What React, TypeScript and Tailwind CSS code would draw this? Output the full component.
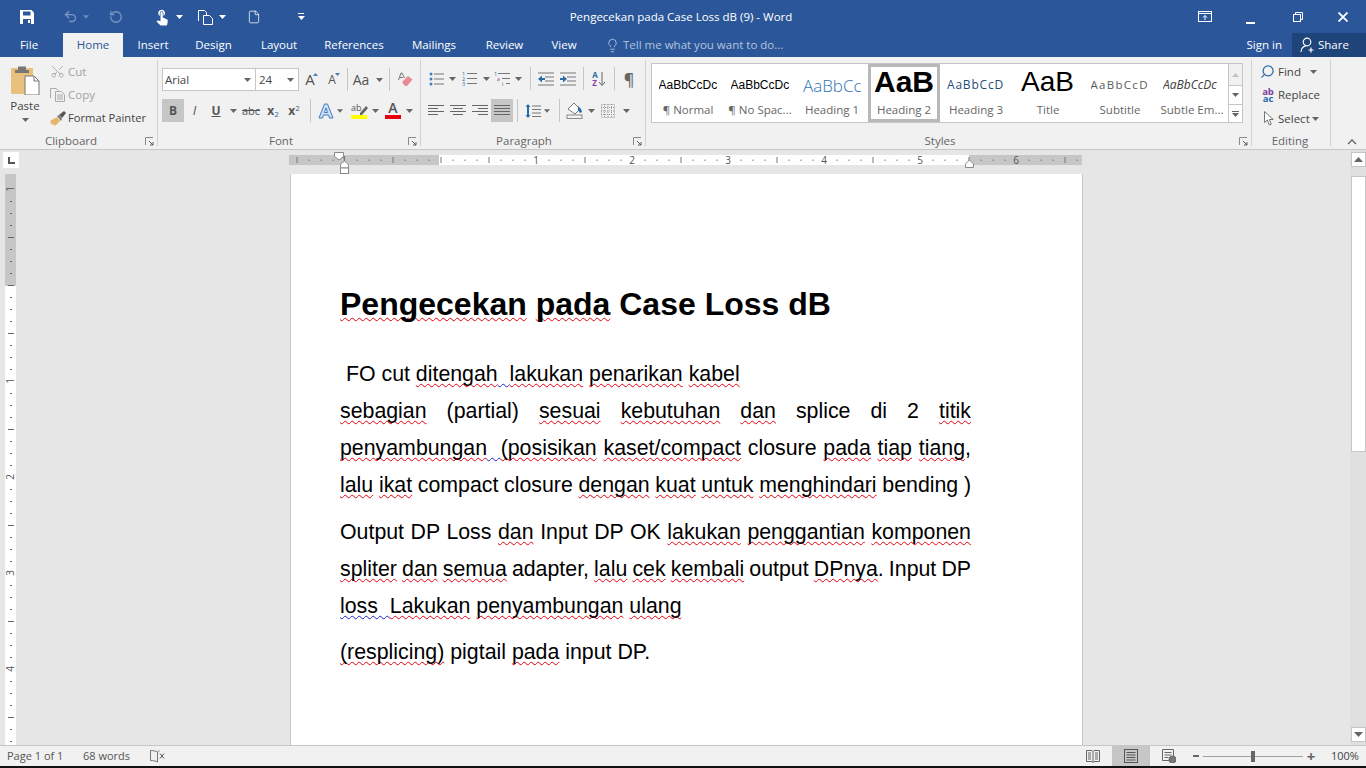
import React from "react";
import { Undo2, RotateCcw, File, Scissors, Search, Lightbulb } from "lucide-react";
import { MdTouchApp } from "react-icons/md";

const Caret = ({ color = "#666" }: { color?: string }) => (
  <svg width="7" height="4" viewBox="0 0 7 4">
    <path d="M0 0h7L3.5 4z" fill={color} />
  </svg>
);

const Launcher = () => (
  <svg width="9" height="9" viewBox="0 0 9 9" fill="none">
    <path d="M0.5 8V0.5H8" stroke="#8a8a8a" />
    <path d="M4 4l4 4M8 5v3H5" stroke="#5a5a5a" />
  </svg>
);

const Lines = ({ rows }: { rows: [number, number][] }) => (
  <svg width="16" height="14" viewBox="0 0 16 14">
    {rows.map(([x, w], i) => (
      <rect key={i} x={x} y={1 + i * 3} width={w} height="1" fill="#666" />
    ))}
  </svg>
);

const VDivider = ({ className }: { className: string }) => (
  <div className={`h-[23px] w-px shrink-0 bg-[#c6c6c6] ${className}`} />
);

const TitleBar = () => (
  <div className="flex h-[33px] items-center text-white">
    <div className="ml-[19px] flex w-[16px] justify-center">
      <svg width="16" height="16" viewBox="0 0 16 16">
        <path d="M1 1h11.5L15 3.5V15H1z" fill="#fff" />
        <path d="M4 2.5h7.5v4H4zM4 10h8v5H4z" fill="#2b579a" />
        <rect x="9" y="11" width="2" height="3" fill="#fff" />
      </svg>
    </div>
    <div className="ml-[27px] flex w-[16px] justify-center">
      <Undo2 size={15} color="#7b96c0" strokeWidth={2.2} />
    </div>
    <div className="ml-[5px] flex w-[6px]">
      <Caret color="#6f8cb8" />
    </div>
    <div className="ml-[19px] flex w-[16px] justify-center">
      <RotateCcw size={14} color="#7b96c0" strokeWidth={2.2} />
    </div>
    <div className="ml-[29px] flex w-[18px] justify-center">
      <MdTouchApp size={19} color="#fff" />
    </div>
    <div className="ml-[5px] flex w-[7px]">
      <Caret color="#fff" />
    </div>
    <div className="ml-[14px] flex w-[17px] justify-center">
      <svg width="17" height="16" viewBox="0 0 17 16" fill="none" stroke="#fff">
        <path d="M1.5 12V1.5h6l2 2V6" />
        <path d="M6.5 6.5h6l3 3v6h-9z" />
      </svg>
    </div>
    <div className="ml-[5px] flex w-[7px]">
      <Caret color="#fff" />
    </div>
    <div className="ml-[21px] flex w-[14px] justify-center">
      <File size={16} color="#fff" strokeWidth={1.3} />
    </div>
    <div className="ml-[36px] flex w-[8px] flex-col items-center gap-[2px]">
      <div className="h-px w-[6px] bg-white" />
      <Caret color="#fff" />
    </div>
    <div className="ml-[5px] w-[742px] text-center text-[11.5px]">Pengecekan pada Case Loss dB (9) - Word</div>
    <div className="ml-[146px] flex w-[14px] justify-center">
      <svg width="14" height="11" viewBox="0 0 14 11" fill="none" stroke="#fff">
        <rect x="0.5" y="0.5" width="13" height="10" />
        <path d="M1 2.5h12M7 9V4.5M5 6.5l2-2 2 2" />
      </svg>
    </div>
    <div className="ml-[34px] flex h-[16px] w-[9px] items-end pb-[1px]">
      <div className="h-[2px] w-[9px] bg-white" />
    </div>
    <div className="ml-[38px] flex w-[10px] justify-center">
      <svg width="10" height="10" viewBox="0 0 10 10" fill="none" stroke="#fff">
        <rect x="0.5" y="2.5" width="7" height="7" strokeWidth="1" />
        <path d="M2.5 2V.5h7v7H8" />
      </svg>
    </div>
    <div className="ml-[35px] flex w-[10px] justify-center">
      <svg width="10" height="10" viewBox="0 0 10 10" stroke="#fff" strokeWidth="1.8">
        <path d="M0.5 0.5l9 9M9.5 0.5l-9 9" />
      </svg>
    </div>
  </div>
);

const tabs: [string, string][] = [
  ["Insert", "w-[60px]"],
  ["Design", "w-[61px]"],
  ["Layout", "w-[70px]"],
  ["References", "w-[80px]"],
  ["Mailings", "w-[80px]"],
  ["Review", "w-[61px]"],
  ["View", "w-[58px]"],
];

const TabRow = () => (
  <div className="flex h-[24px] items-center text-[11.5px] text-white">
    <div className="w-[58px] shrink-0 text-center">File</div>
    <div className="ml-[5px] flex h-full w-[60px] shrink-0 items-center justify-center bg-[#f1f1f1] text-[#2b579a]">Home</div>
    {tabs.map(([label, w]) => (
      <div key={label} className={`${w} shrink-0 text-center`}>
        {label}
      </div>
    ))}
    <div className="ml-[11px] flex w-[17px] shrink-0 justify-center">
      <Lightbulb size={15} color="#b5c6de" strokeWidth={1.4} />
    </div>
    <div className="ml-[2px] whitespace-nowrap text-[#b4c4dc]">Tell me what you want to do...</div>
    <div className="ml-auto flex h-full items-center">
      <div className="mr-[10px]">Sign in</div>
      <div className="flex h-full w-[74px] items-center bg-[#1f4479] pl-[8px]">
        <svg width="14" height="16" viewBox="0 0 14 16" fill="none" stroke="#fff" strokeWidth="1.2">
          <circle cx="7" cy="5" r="3.8" />
          <path d="M1 15c0-3.5 2.500-6 5-6.200M8.500 13h5M11 10.500v5" />
        </svg>
        <span className="ml-[4px]">Share</span>
      </div>
    </div>
  </div>
);

const GroupFoot = ({ label, w, launcher = true }: { label: string; w: string; launcher?: boolean }) => (
  <div className="-mb-[2px] mt-auto flex h-[14px] shrink-0 items-center">
    <span className={`${w} text-center text-[11.5px] leading-[14px] text-[#666]`}>{label}</span>
    {launcher && (
      <div className="ml-auto mr-[3px] flex">
        <Launcher />
      </div>
    )}
  </div>
);

const ClipboardGroup = () => (
  <div className="flex w-[158px] shrink-0 flex-col border-r border-[#d0d0d0]">
    <div className="flex h-[73px]">
      <div className="flex w-[50px] flex-col items-center pt-[5px]">
        <svg width="30" height="30" viewBox="0 0 30 30">
          <rect x="1" y="3" width="22" height="26" rx="1" fill="#e8c27d" />
          <path d="M8 1.500h8V5h3v3H5V5h3z" fill="#777" />
          <path d="M15 11h9l5 5v14H15z" fill="#fff" stroke="#777" />
          <path d="M24 11v5h5" fill="none" stroke="#777" />
        </svg>
        <span className="mt-[4px] text-[11.5px] leading-[14px] text-[#444]">Paste</span>
        <div className="mt-[5px] flex">
          <Caret />
        </div>
      </div>
      <div className="flex flex-col text-[11.5px]">
        <div className="flex h-[23px] items-center text-[#a3a3a3]">
          <div className="flex w-[18px]">
            <Scissors size={15} color="#a8a8a8" strokeWidth={1.4} className="-rotate-90" />
          </div>
          Cut
        </div>
        <div className="flex h-[24px] items-center text-[#a3a3a3]">
          <div className="flex w-[18px]">
            <svg width="15" height="14" viewBox="0 0 15 14" fill="none" stroke="#ababab">
              <path d="M0.500 10V0.500h6l1.500 2" />
              <path d="M5.500 3.500h6l3 3v7h-9zM7 7h6M7 9h6M7 11h6" />
            </svg>
          </div>
          Copy
        </div>
        <div className="flex h-[23px] items-center whitespace-nowrap text-[11.2px] text-[#444]">
          <div className="flex w-[18px]">
            <svg width="16" height="15" viewBox="0 0 16 15">
              <path d="M0 10l7-4 3 4-5 5-1-2-2 1z" fill="#e3b568" />
              <path d="M7 5l2-1 3 4-1 2z" fill="#777" />
              <path d="M9 4l5-4 2 2-4 5z" fill="#555" />
            </svg>
          </div>
          Format Painter
        </div>
      </div>
    </div>
    <GroupFoot label="Clipboard" w="w-[142px]" />
  </div>
);

const FontGroup = () => (
  <div className="flex w-[263px] shrink-0 flex-col border-r border-[#d0d0d0] pl-[4px]">
    <div className="mt-[8px] flex h-[23px] items-center text-[#555]">
      <div className="flex h-[23px] w-[94px] items-center border border-[#c6c6c6] bg-white pl-[2px] pr-[4px] text-[11.5px] text-[#444]">
        Arial
        <div className="ml-auto flex">
          <Caret />
        </div>
      </div>
      <div className="flex h-[23px] w-[43px] items-center border border-l-0 border-[#c6c6c6] bg-white pl-[3px] pr-[4px] text-[11.5px] text-[#444]">
        24
        <div className="ml-auto flex">
          <Caret />
        </div>
      </div>
      <div className="relative flex h-full w-[22px] items-center justify-center text-[15px]">
        A
        <svg className="absolute right-[3px] top-[5px]" width="5" height="3" viewBox="0 0 5 3">
          <path d="M0 3h5L2.500 0z" fill="#4a7cb8" />
        </svg>
      </div>
      <div className="relative flex h-full w-[22px] items-center justify-center text-[12px]">
        A
        <svg className="absolute right-[3px] top-[5px]" width="5" height="3" viewBox="0 0 5 3">
          <path d="M0 0h5L2.500 3z" fill="#4a7cb8" />
        </svg>
      </div>
      <VDivider className="ml-[4px]" />
      <div className="flex w-[26px] justify-center text-[14px]">Aa</div>
      <div className="flex w-[10px] justify-center">
        <Caret />
      </div>
      <VDivider className="ml-[5px]" />
      <div className="flex w-[30px] justify-center">
        <svg width="16" height="16" viewBox="0 0 16 16">
          <path d="M5 10l6-6 4.500 3.500L10 14H8z" fill="#e88b96" />
          <path d="M1.500 8l2.500-7h1l2.500 5M3 5.500h3" fill="none" stroke="#777" />
        </svg>
      </div>
    </div>
    <div className="mt-[8px] flex h-[23px] items-center text-[#555]">
      <div className="flex h-full w-[22px] items-center justify-center bg-[#c6c6c6] text-[12px] font-bold">B</div>
      <div className="w-[21px] text-center text-[13px] italic">I</div>
      <div className="w-[22px] text-center text-[12px] font-bold underline">U</div>
      <div className="flex w-[12px] justify-center">
        <Caret />
      </div>
      <div className="ml-[1px] w-[22px] text-center text-[11px] leading-none line-through">abc</div>
      <div className="w-[22px] text-center text-[12px] font-bold">
        x<sub className="text-[8px] font-normal text-[#2b6ca8]">2</sub>
      </div>
      <div className="w-[20px] text-center text-[12px] font-bold">
        x<sup className="text-[8px] font-normal">2</sup>
      </div>
      <VDivider className="ml-[6px]" />
      <div className="ml-[4px] flex w-[22px] justify-center">
        <svg width="16" height="16" viewBox="0 0 16 16">
          <path d="M6.500 1h3L15 15h-3.500l-1-3h-5l-1 3H1z" fill="#cfe0f3" stroke="#3f7cc0" />
          <path d="M8 5l1.600 4.500H6.400z" fill="#fff" stroke="#3f7cc0" />
        </svg>
      </div>
      <div className="flex w-[6px] justify-center">
        <Caret />
      </div>
      <div className="ml-[5px] flex w-[22px] justify-center">
        <svg width="17" height="16" viewBox="0 0 17 16">
          <text x="0" y="8" fontSize="9" fill="#555" fontFamily="Open Sans">ab</text>
          <path d="M9 10l6-7 2 2-6 7H9z" fill="#666" />
          <rect x="0" y="12" width="16" height="4" fill="#ffff00" />
        </svg>
      </div>
      <div className="flex w-[10px] justify-center">
        <Caret />
      </div>
      <div className="ml-[2px] flex w-[22px] flex-col items-center">
        <span className="h-[12px] text-[14px] font-semibold leading-[12px]">A</span>
        <div className="mt-[1px] h-[4px] w-[16px] bg-[#e8000f]" />
      </div>
      <div className="flex w-[10px] justify-center">
        <Caret />
      </div>
    </div>
    <GroupFoot label="Font" w="w-[238px]" />
  </div>
);

const ParagraphGroup = () => (
  <div className="flex w-[225px] shrink-0 flex-col border-r border-[#d0d0d0] pl-[4px]">
    <div className="mt-[7px] flex h-[23px] items-center text-[#555]">
      <div className="flex w-[22px] justify-center">
        <svg width="15" height="14" viewBox="0 0 15 14">
          <circle cx="2" cy="2" r="1.500" fill="#3f7cc0" />
          <circle cx="2" cy="7" r="1.500" fill="#3f7cc0" />
          <circle cx="2" cy="12" r="1.500" fill="#3f7cc0" />
          <path d="M5 2h10M5 7h10M5 12h10" stroke="#777" />
        </svg>
      </div>
      <div className="flex w-[10px] justify-center">
        <Caret />
      </div>
      <div className="flex w-[24px] justify-center">
        <svg width="15" height="15" viewBox="0 0 15 15">
          <text x="0" y="5" fontSize="5.500" fill="#2b6ca8" fontFamily="Open Sans">1</text>
          <text x="0" y="10" fontSize="5.500" fill="#2b6ca8" fontFamily="Open Sans">2</text>
          <text x="0" y="15" fontSize="5.500" fill="#2b6ca8" fontFamily="Open Sans">3</text>
          <path d="M5 2.500h10M5 7.500h10M5 12.500h10" stroke="#777" />
        </svg>
      </div>
      <div className="flex w-[10px] justify-center">
        <Caret />
      </div>
      <div className="flex w-[22px] justify-center">
        <svg width="16" height="15" viewBox="0 0 16 15">
          <text x="0" y="5" fontSize="5.500" fill="#2b6ca8" fontFamily="Open Sans">1</text>
          <text x="3" y="10" fontSize="5" fill="#7a3fa0" fontFamily="Open Sans">a</text>
          <text x="8" y="15" fontSize="5" fill="#555" fontFamily="Open Sans">i</text>
          <path d="M4 2.500h12M8 7.500h8M12 12.500h4" stroke="#777" />
        </svg>
      </div>
      <div className="flex w-[10px] justify-center">
        <Caret />
      </div>
      <VDivider className="ml-[7px]" />
      <div className="flex w-[30px] justify-center">
        <svg width="16" height="14" viewBox="0 0 16 14">
          <path d="M0 1h16M7 5h9M7 9h9M0 13h16" stroke="#777" />
          <path d="M0 7l4-3.500V6h3v2H4v2.500z" fill="#2b6ca8" />
        </svg>
      </div>
      <div className="flex w-[14px] justify-center">
        <svg width="16" height="14" viewBox="0 0 16 14" className="shrink-0">
          <path d="M0 1h16M7 5h9M7 9h9M0 13h16" stroke="#777" />
          <path d="M7 7L3 3.500V6H0v2h3v2.500z" fill="#2b6ca8" />
        </svg>
      </div>
      <VDivider className="ml-[8px]" />
      <div className="flex w-[30px] items-center justify-center">
        <div className="flex flex-col text-[8px] font-bold leading-[8px]">
          <span className="text-[#2b6ca8]">A</span>
          <span className="text-[#8a3fa8]">Z</span>
        </div>
        <svg width="8" height="16" viewBox="0 0 8 16" fill="none" stroke="#666">
          <path d="M4 1v13M1 11l3 3.500L7 11" />
        </svg>
      </div>
      <VDivider className="" />
      <div className="w-[28px] text-center text-[16px] font-semibold leading-none text-[#666]">¶</div>
    </div>
    <div className="mt-[9px] flex h-[23px] items-center">
      <div className="flex w-[22px] justify-center">
        <Lines rows={[[0, 16], [0, 10], [0, 16], [0, 10]]} />
      </div>
      <div className="flex w-[22px] justify-center">
        <Lines rows={[[0, 16], [3, 10], [0, 16], [3, 10]]} />
      </div>
      <div className="flex w-[22px] justify-center">
        <Lines rows={[[0, 16], [6, 10], [0, 16], [6, 10]]} />
      </div>
      <div className="flex h-full w-[22px] items-center justify-center bg-[#c6c6c6]">
        <Lines rows={[[0, 16], [0, 16], [0, 16], [0, 16]]} />
      </div>
      <VDivider className="ml-[4px]" />
      <div className="ml-[4px] flex w-[22px] justify-center">
        <svg width="16" height="16" viewBox="0 0 16 16">
          <path d="M3 1l2.500 3H4v8h1.500L3 15 .500 12H2V4H.500z" fill="#2b6ca8" />
          <path d="M7 3h9M7 6.500h9M7 10h9M7 13.500h9" stroke="#777" />
        </svg>
      </div>
      <div className="flex w-[6px] justify-center">
        <Caret />
      </div>
      <VDivider className="ml-[9px]" />
      <div className="ml-[4px] flex w-[22px] justify-center">
        <svg width="18" height="17" viewBox="0 0 18 17">
          <path d="M2 7l6-6 6 6-5 5z" fill="#fff" stroke="#777" />
          <path d="M12 4l3 3 1 3-2 1-2-3z" fill="#2b6ca8" />
          <rect x="1" y="13" width="15" height="3.500" fill="#f3f3f3" stroke="#888" />
        </svg>
      </div>
      <div className="flex w-[10px] justify-center">
        <Caret />
      </div>
      <div className="flex w-[24px] justify-center">
        <svg width="14" height="14" viewBox="0 0 14 14" fill="none" stroke="#9a9a9a" strokeDasharray="1 1">
          <rect x="0.500" y="0.500" width="13" height="13" />
          <path d="M7 0v14M0 7h14M3.500 0v14M10.500 0v14M0 3.500h14M0 10.500h14" />
        </svg>
      </div>
      <div className="flex w-[12px] justify-center">
        <Caret />
      </div>
    </div>
    <GroupFoot label="Paragraph" w="w-[198px]" />
  </div>
);

const StyleItem = ({ label, preview, previewClass }: { label: string; preview: string; previewClass: string }) => (
  <div className="flex h-[58px] w-[72px] flex-col items-center">
    <div className={`mt-[3px] flex h-[36px] items-center overflow-hidden whitespace-nowrap leading-none ${previewClass}`}>
      {preview}
    </div>
    <div className="whitespace-nowrap text-[11.5px] leading-[14px] text-[#666]">{label}</div>
  </div>
);

const StylesGroup = () => (
  <div className="flex w-[606px] shrink-0 flex-col border-r border-[#d0d0d0]">
    <div className="ml-[5px] mt-[3px] flex h-[60px] w-[592px]">
      <div className="flex flex-1 border border-[#c6c6c6] bg-white">
        <StyleItem label="¶ Normal" previewClass="w-[59px] font-['Liberation_Sans',sans-serif] text-[12px] text-black" preview="AaBbCcDc" />
        <StyleItem label="¶ No Spac..." previewClass="w-[59px] font-['Liberation_Sans',sans-serif] text-[12px] text-black" preview="AaBbCcDc" />
        <StyleItem label="Heading 1" previewClass="w-[58px] text-[17px] font-light text-[#2e74b5]" preview="AaBbCc" />
        <div className="flex h-[58px] w-[72px] flex-col items-center overflow-hidden border-[3px] border-[#b8b8b8]">
          <div className="flex h-[36px] w-[60px] items-center overflow-hidden whitespace-nowrap pb-[6px] font-['Liberation_Sans',sans-serif] text-[30px] font-bold leading-none text-black">
            AaB
          </div>
          <div className="text-[11.5px] leading-[14px] text-[#666]">Heading 2</div>
        </div>
        <StyleItem label="Heading 3" previewClass="w-[58px] text-[12px] tracking-[0.8px] text-[#1f4d78]" preview="AaBbCcD" />
        <StyleItem label="Title" previewClass="w-[54px] pb-[6px] font-['Liberation_Sans',sans-serif] text-[28px] font-light text-black" preview="AaB" />
        <StyleItem label="Subtitle" previewClass="w-[59px] text-[11.5px] tracking-[1.3px] text-[#5a5a5a]" preview="AaBbCcD" />
        <StyleItem label="Subtle Em..." previewClass="w-[58px] text-[12px] italic text-[#404040]" preview="AaBbCcDc" />
      </div>
      <div className="flex w-[14px] flex-col border border-l-0 border-[#c6c6c6]">
        <div className="flex h-[21px] items-center justify-center bg-[#f1f1f1]">
          <svg width="7" height="4" viewBox="0 0 7 4">
            <path d="M0 4h7L3.500 0z" fill="#c2c2c2" />
          </svg>
        </div>
        <div className="flex h-[19px] items-center justify-center border-t border-[#c6c6c6] bg-white">
          <Caret />
        </div>
        <div className="flex flex-1 flex-col items-center justify-center gap-[1px] border-t border-[#c6c6c6] bg-white">
          <div className="h-px w-[7px] bg-[#666]" />
          <Caret />
        </div>
      </div>
    </div>
    <GroupFoot label="Styles" w="w-[588px]" />
  </div>
);

const EditingGroup = () => (
  <div className="flex w-[79px] shrink-0 flex-col border-r border-[#d0d0d0]">
    <div className="flex h-[73px] flex-col text-[11.5px] text-[#444]">
      <div className="flex h-[23px] items-center">
        <div className="flex w-[26px] justify-end pr-[3px]">
          <Search size={15} color="#2b6ca8" strokeWidth={2} className="-scale-x-100" />
        </div>
        Find
        <div className="ml-[9px] flex">
          <Caret />
        </div>
      </div>
      <div className="flex h-[24px] items-center">
        <div className="flex w-[26px] flex-col items-center pl-[6px] text-[9.5px] font-bold leading-[7px]">
          <span className="text-[#7a3fa0]">ab</span>
          <span className="text-[#2b6ca8]">ac</span>
        </div>
        Replace
      </div>
      <div className="flex h-[23px] items-center">
        <div className="flex w-[26px] justify-end pr-[4px]">
          <svg width="10" height="15" viewBox="0 0 10 15" fill="#fff" stroke="#777">
            <path d="M.500.500v11l2.800-2.500 2 5 2-.8-2-4.700h4z" />
          </svg>
        </div>
        Select
        <div className="ml-[2px] flex">
          <Caret />
        </div>
      </div>
    </div>
    <GroupFoot label="Editing" w="w-[76px]" launcher={false} />
  </div>
);

const Ribbon = () => (
  <div className="flex h-[93px] border-b border-[#c6c6c6] bg-[#f1f1f1] pt-[3px]">
    <div className="flex h-[86px]">
      <ClipboardGroup />
      <FontGroup />
      <ParagraphGroup />
      <StylesGroup />
      <EditingGroup />
    </div>
    <div className="ml-[16px] mt-[79px] flex h-[6px]">
      <svg width="10" height="6" viewBox="0 0 10 6" fill="none" stroke="#666" strokeWidth="1.400">
        <path d="M1 5l4-4 4 4" />
      </svg>
    </div>
  </div>
);

const hTicks = Array.from({ length: 66 }, (_, i) => i);

// x coordinates below are page x minus 289
const HRuler = () => (
  <svg width="793" height="24" viewBox="0 0 793 24" className="shrink-0">
    <rect x="0" y="5" width="793" height="10" fill="#c6c6c6" />
    <rect x="150" y="5" width="530" height="10" fill="#fff" />
    {hTicks.map((i) => {
      const x = 7.500 + i * 12;
      const fromZero = i - 12;
      const isNum = fromZero % 8 === 0;
      const isHalf = fromZero % 4 === 0;
      if (isNum && fromZero !== 0) {
        return (
          <text key={i} x={x - 0.500} y="13.500" fontSize="10" fill="#555" textAnchor="middle" fontFamily="Open Sans">
            {Math.abs(fromZero / 8)}
          </text>
        );
      }
      if (isHalf) return <rect key={i} x={x} y="7" width="1" height="6" fill="#777" />;
      return <rect key={i} x={x} y="9.500" width="1" height="1.500" fill="#777" />;
    })}
    <path d="M45.500 2.500h9v4l-4.500 3.500-4.500-3.500z" fill="#fff" stroke="#8a8a8a" />
    <path d="M55.500 11l4 3.500v3.500h-8v-3.500z" fill="#fff" stroke="#8a8a8a" />
    <rect x="51.500" y="18" width="8" height="5.500" fill="#fff" stroke="#8a8a8a" />
    <path d="M680.500 10l4 4v3.500h-8V14z" fill="#fff" stroke="#8a8a8a" />
  </svg>
);

const vTicks = Array.from({ length: 48 }, (_, i) => i);

const VRuler = () => (
  <svg width="11" height="571" viewBox="0 0 11 571" className="ml-[5px] shrink-0">
    <rect x="0" y="0" width="11" height="112" fill="#c6c6c6" />
    <rect x="0" y="112" width="11" height="459" fill="#fff" />
    {vTicks.map((i) => {
      const y = 15 + i * 12;
      const fromZero = i - 8;
      if (fromZero % 8 === 0 && fromZero !== 0) {
        return (
          <text
            key={i}
            x="6"
            y={y + 3}
            fontSize="10"
            fill="#555"
            textAnchor="middle"
            fontFamily="Open Sans"
            transform={`rotate(-90 6 ${y})`}
          >
            {Math.abs(fromZero / 8)}
          </text>
        );
      }
      if (fromZero % 4 === 0) return <rect key={i} x="3" y={y} width="6" height="1" fill="#666" />;
      return <rect key={i} x="5" y={y} width="2" height="1" fill="#666" />;
    })}
  </svg>
);

const Bad = ({ children }: { children: React.ReactNode }) => (
  <span className="underline decoration-[#e8000f] decoration-wavy decoration-1 underline-offset-[2px] [text-decoration-skip-ink:none]">
    {children}
  </span>
);

const Gram = ({ children }: { children: React.ReactNode }) => (
  <span className="underline decoration-[#2222cc] decoration-wavy decoration-1 underline-offset-[2px] [text-decoration-skip-ink:none]">
    {children}
  </span>
);

const Line = ({ children, last = false, extra = "" }: { children: React.ReactNode; last?: boolean; extra?: string }) => (
  <div className={`h-[37px] leading-[37px] ${last ? "" : "text-justify [text-align-last:justify]"} ${extra}`}>
    {children}
  </div>
);

const Page = () => (
  <div className="ml-[275px] h-[571px] w-[791px] shrink-0 overflow-hidden bg-white pl-[49px] pr-[111px] pt-[112px] font-['Liberation_Sans',sans-serif] text-[21.33px] text-black shadow-[-1px_0_0_#c6c6c6,1px_0_0_#c6c6c6]">
    <div className="h-[37px] whitespace-nowrap text-[32px] font-bold leading-[37px]">
      <Bad>Pengecekan</Bad> <Bad>pada</Bad> Case Loss dB
    </div>
    <div className="mt-[33px]">
      <Line last>
        &nbsp;FO cut <Bad>ditengah</Bad>
        <Gram>&nbsp; </Gram>
        <Bad>lakukan</Bad> <Bad>penarikan</Bad> <Bad>kabel</Bad>
      </Line>
      <Line>
        <Bad>sebagian</Bad> (partial) <Bad>sesuai</Bad> <Bad>kebutuhan</Bad> <Bad>dan</Bad> splice di 2 <Bad>titik</Bad>
      </Line>
      <Line>
        <Bad>penyambungan</Bad>
        <Gram>&nbsp; </Gram>
        <Bad>(posisikan</Bad> <Bad>kaset/compact</Bad> closure <Bad>pada</Bad> <Bad>tiap</Bad> <Bad>tiang</Bad>,
      </Line>
      <Line extra="mb-[10px] [word-spacing:-2.5px]">
        <Bad>lalu</Bad> <Bad>ikat</Bad> compact closure <Bad>dengan</Bad> <Bad>kuat</Bad> <Bad>untuk</Bad> <Bad>menghindari</Bad> bending )
      </Line>
      <Line>
        Output DP Loss <Bad>dan</Bad> Input DP OK <Bad>lakukan</Bad> <Bad>penggantian</Bad> <Bad>komponen</Bad>
      </Line>
      <Line extra="[word-spacing:-2.5px]">
        <Bad>spliter</Bad> <Bad>dan</Bad> <Bad>semua</Bad> adapter, <Bad>lalu</Bad> <Bad>cek</Bad> <Bad>kembali</Bad> output <Bad>DPnya</Bad>. Input DP
      </Line>
      <Line last extra="mb-[9px]">
        <Gram>loss&nbsp; </Gram>
        <Bad>Lakukan</Bad> <Bad>penyambungan</Bad> <Bad>ulang</Bad>
      </Line>
      <Line last>
        <Bad>(resplicing)</Bad> pigtail <Bad>pada</Bad> input DP.
      </Line>
    </div>
  </div>
);

const Scrollbar = () => (
  <div className="flex w-[16px] shrink-0 flex-col items-center bg-[#e0e0e0] pt-[2px]">
    <div className="flex h-[15px] w-[15px] items-center justify-center border border-[#c6c6c6] bg-white">
      <svg width="9" height="5" viewBox="0 0 9 5">
        <path d="M0 5h9L4.500 0z" fill="#666" />
      </svg>
    </div>
    <div className="mt-[9px] h-[276px] w-[15px] border border-[#c6c6c6] bg-white" />
    <div className="mb-[3px] mt-auto flex h-[15px] w-[15px] items-center justify-center border border-[#c6c6c6] bg-white">
      <svg width="9" height="5" viewBox="0 0 9 5">
        <path d="M0 0h9L4.500 5z" fill="#666" />
      </svg>
    </div>
  </div>
);

const WorkArea = () => (
  <div className="flex h-[595px] bg-[#e6e6e6]">
    <div className="flex w-[1350px] flex-col">
      <div className="flex h-[24px]">
        <div className="ml-[3px] mt-[2px] flex h-[16px] w-[16px] items-center justify-center bg-white">
          <svg width="8" height="7" viewBox="0 0 8 7">
            <path d="M1 0h2v5h5v2H1z" fill="#555" />
          </svg>
        </div>
        <div className="ml-[270px]">
          <HRuler />
        </div>
      </div>
      <div className="flex h-[571px]">
        <VRuler />
        <Page />
      </div>
    </div>
    <Scrollbar />
  </div>
);

const StatusBar = () => (
  <div className="flex h-[21px] items-center border-t border-[#c6c6c6] bg-[#f1f1f1] text-[11px] text-[#555]">
    <span className="ml-[7px] w-[76px]">Page 1 of 1</span>
    <span className="w-[67px]">68 words</span>
    <svg width="15" height="13" viewBox="0 0 15 13" fill="none" stroke="#777">
      <path d="M7.500 2C6 1 3 .5.500.500v10c2.500 0 5.500.5 7 1.500V2zM7.500 2c.5-.5 1-1 2-1.200" />
      <path d="M10 3.500l4 5M14 3.500l-4 5" stroke="#555" />
    </svg>
    <div className="ml-auto flex h-full items-center">
      <div className="flex h-full w-[38px] items-center justify-center">
        <svg width="14" height="13" viewBox="0 0 14 13" fill="none" stroke="#666">
          <path d="M.500.500h5.500l1 1 1-1h5.500v11H8l-1 1-1-1H.500zM7 1.500v11M2 3h3M2 5h3M2 7h3M2 9h3M9 3h3M9 5h3M9 7h3M9 9h3" />
        </svg>
      </div>
      <div className="flex h-full w-[38px] items-center justify-center bg-[#c6c6c6]">
        <svg width="14" height="14" viewBox="0 0 14 14" fill="none" stroke="#555">
          <rect x="0.500" y="0.500" width="13" height="13" />
          <path d="M2.500 3.500h9M2.500 6h9M2.500 8.500h9M2.500 11h9" />
        </svg>
      </div>
      <div className="flex h-full w-[38px] items-center justify-center">
        <svg width="14" height="14" viewBox="0 0 14 14" fill="none" stroke="#666">
          <path d="M.500.500h11v7M.500.500v11h7M2.500 3.500h7M2.500 6h7M2.500 8.500h4" />
          <circle cx="10.500" cy="10.500" r="3.500" fill="#777" />
        </svg>
      </div>
      <div className="ml-[5px] h-[2px] w-[6px] bg-[#666]" />
      <div className="relative ml-[4px] h-px w-[100px] bg-[#a0a0a0]">
        <div className="absolute left-[48px] top-[-5px] h-[11px] w-[4px] bg-[#666]" />
      </div>
      <div className="ml-[3px] w-[10px] text-center text-[15px] font-bold leading-none text-[#666]">+</div>
      <span className="ml-[15px] mr-[8px] w-[27px] whitespace-nowrap text-[#444]">100%</span>
    </div>
  </div>
);

export default function App() {
  return (
    <div className="flex h-[768px] w-[1366px] flex-col overflow-hidden bg-[#111] font-['Open_Sans',sans-serif]">
      <div className="bg-[#2b579a]">
        <TitleBar />
        <TabRow />
      </div>
      <Ribbon />
      <WorkArea />
      <StatusBar />
    </div>
  );
}
